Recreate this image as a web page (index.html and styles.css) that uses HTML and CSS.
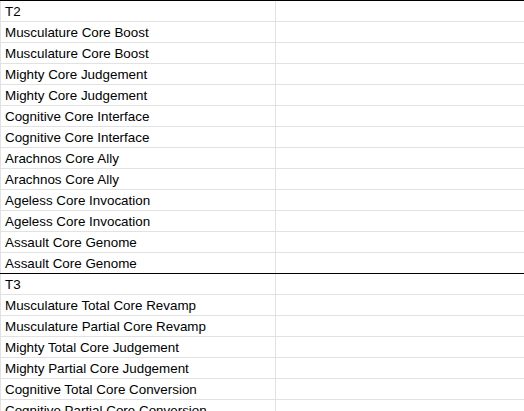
FILE: index.html
```html
<!DOCTYPE html>
<html>
<head>
<meta charset="utf-8">
<link rel="stylesheet" href="styles.css">
</head>
<body>
<div class="sheet">
  <div class="row section"><div class="cell">T2</div><div class="cell"></div></div>
  <div class="row"><div class="cell">Musculature Core Boost</div><div class="cell"></div></div>
  <div class="row"><div class="cell">Musculature Core Boost</div><div class="cell"></div></div>
  <div class="row"><div class="cell">Mighty Core Judgement</div><div class="cell"></div></div>
  <div class="row"><div class="cell">Mighty Core Judgement</div><div class="cell"></div></div>
  <div class="row"><div class="cell">Cognitive Core Interface</div><div class="cell"></div></div>
  <div class="row"><div class="cell">Cognitive Core Interface</div><div class="cell"></div></div>
  <div class="row"><div class="cell">Arachnos Core Ally</div><div class="cell"></div></div>
  <div class="row"><div class="cell">Arachnos Core Ally</div><div class="cell"></div></div>
  <div class="row"><div class="cell">Ageless Core Invocation</div><div class="cell"></div></div>
  <div class="row"><div class="cell">Ageless Core Invocation</div><div class="cell"></div></div>
  <div class="row"><div class="cell">Assault Core Genome</div><div class="cell"></div></div>
  <div class="row"><div class="cell">Assault Core Genome</div><div class="cell"></div></div>
  <div class="row section"><div class="cell">T3</div><div class="cell"></div></div>
  <div class="row"><div class="cell">Musculature Total Core Revamp</div><div class="cell"></div></div>
  <div class="row"><div class="cell">Musculature Partial Core Revamp</div><div class="cell"></div></div>
  <div class="row"><div class="cell">Mighty Total Core Judgement</div><div class="cell"></div></div>
  <div class="row"><div class="cell">Mighty Partial Core Judgement</div><div class="cell"></div></div>
  <div class="row"><div class="cell">Cognitive Total Core Conversion</div><div class="cell"></div></div>
  <div class="row"><div class="cell">Cognitive Partial Core Conversion</div><div class="cell"></div></div>
</div>
</body>
</html>
```
FILE: styles.css
```css
html, body {
  margin: 0;
  padding: 0;
  background: #ffffff;
  overflow: hidden;
}
.sheet {
  display: flex;
  flex-direction: column;
  font-family: "Liberation Sans", Arial, sans-serif;
  font-size: 13.4px;
  color: #000000;
}
.row {
  display: grid;
  grid-template-columns: 276px 1fr;
  height: 21px;
  box-sizing: border-box;
  border-top: 1px solid #e2e2e2;
}
.row.section {
  border-top-color: #000000;
}
.cell {
  height: 20px;
  line-height: 20px;
  box-sizing: border-box;
  padding: 1px 0 0 4px;
  white-space: nowrap;
  overflow: hidden;
}
.cell:first-child {
  border-left: 1px solid #e2e2e2;
  border-right: 1px solid #e2e2e2;
}
```
